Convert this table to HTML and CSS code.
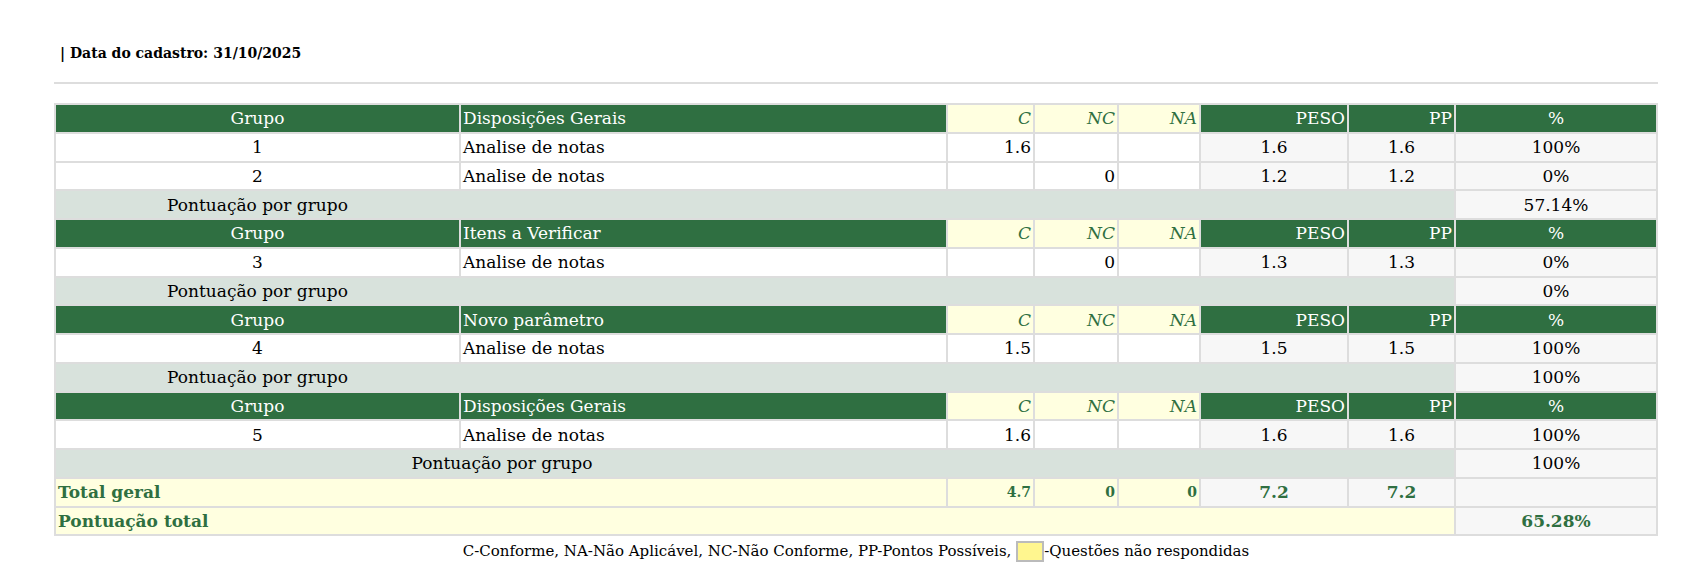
FILE: index.html
```html
<!DOCTYPE html>
<html lang="pt-BR">
<head>
<meta charset="utf-8">
<title>Relatório</title>
<link rel="stylesheet" href="styles.css">
</head>
<body>
<div class="page">
  <p class="cadastro">| Data do cadastro: 31/10/2025</p>
  <div class="rule"></div>
  <table class="score">
    <colgroup>
      <col class="c-grupo"><col class="c-nome"><col class="c-c"><col class="c-nc"><col class="c-na"><col class="c-peso"><col class="c-pp"><col class="c-pct">
    </colgroup>
    <tbody>
      <tr class="head">
        <td class="center">Grupo</td><td>Disposições Gerais</td>
        <td class="yh">C</td><td class="yh">NC</td><td class="yh">NA</td>
        <td class="right">PESO</td><td class="right">PP</td><td class="center">%</td>
      </tr>
      <tr class="item">
        <td class="center">1</td><td>Analise de notas</td>
        <td class="right">1.6</td><td class="right"></td><td class="right"></td>
        <td class="soft center">1.6</td><td class="soft center">1.6</td><td class="soft center">100%</td>
      </tr>
      <tr class="item">
        <td class="center">2</td><td>Analise de notas</td>
        <td class="right"></td><td class="right">0</td><td class="right"></td>
        <td class="soft center">1.2</td><td class="soft center">1.2</td><td class="soft center">0%</td>
      </tr>
      <tr class="sum">
        <td colspan="7"><span class="lbl lbl-1">Pontuação por grupo</span></td><td class="soft center">57.14%</td>
      </tr>
      <tr class="head">
        <td class="center">Grupo</td><td>Itens a Verificar</td>
        <td class="yh">C</td><td class="yh">NC</td><td class="yh">NA</td>
        <td class="right">PESO</td><td class="right">PP</td><td class="center">%</td>
      </tr>
      <tr class="item">
        <td class="center">3</td><td>Analise de notas</td>
        <td class="right"></td><td class="right">0</td><td class="right"></td>
        <td class="soft center">1.3</td><td class="soft center">1.3</td><td class="soft center">0%</td>
      </tr>
      <tr class="sum">
        <td colspan="7"><span class="lbl lbl-1">Pontuação por grupo</span></td><td class="soft center">0%</td>
      </tr>
      <tr class="head">
        <td class="center">Grupo</td><td>Novo parâmetro</td>
        <td class="yh">C</td><td class="yh">NC</td><td class="yh">NA</td>
        <td class="right">PESO</td><td class="right">PP</td><td class="center">%</td>
      </tr>
      <tr class="item">
        <td class="center">4</td><td>Analise de notas</td>
        <td class="right">1.5</td><td class="right"></td><td class="right"></td>
        <td class="soft center">1.5</td><td class="soft center">1.5</td><td class="soft center">100%</td>
      </tr>
      <tr class="sum">
        <td colspan="7"><span class="lbl lbl-1">Pontuação por grupo</span></td><td class="soft center">100%</td>
      </tr>
      <tr class="head">
        <td class="center">Grupo</td><td>Disposições Gerais</td>
        <td class="yh">C</td><td class="yh">NC</td><td class="yh">NA</td>
        <td class="right">PESO</td><td class="right">PP</td><td class="center">%</td>
      </tr>
      <tr class="item">
        <td class="center">5</td><td>Analise de notas</td>
        <td class="right">1.6</td><td class="right"></td><td class="right"></td>
        <td class="soft center">1.6</td><td class="soft center">1.6</td><td class="soft center">100%</td>
      </tr>
      <tr class="sum">
        <td colspan="7"><span class="lbl lbl-2">Pontuação por grupo</span></td><td class="soft center">100%</td>
      </tr>
      <tr class="total">
        <td colspan="2">Total geral</td>
        <td class="right small">4.7</td><td class="right small">0</td><td class="right small">0</td>
        <td class="soft center">7.2</td><td class="soft center">7.2</td><td class="soft"></td>
      </tr>
      <tr class="total">
        <td colspan="7">Pontuação total</td><td class="soft center">65.28%</td>
      </tr>
    </tbody>
  </table>
  <p class="legend">C-Conforme, NA-Não Aplicável, NC-Não Conforme, PP-Pontos Possíveis, <span class="swatch"></span>-Questões não respondidas</p>
</div>
</body>
</html>
```
FILE: styles.css
```css
html, body {
  margin: 0;
  padding: 0;
  background: #ffffff;
}
body {
  font-family: "DejaVu Serif", serif;
  color: #000;
}
.page {
  width: 1604px;
  margin-left: 54px;
  padding-top: 45px;
}
.cadastro {
  margin: 0 0 0 6px;
  font-size: 14px;
  font-weight: bold;
  line-height: 17px;
}
.rule {
  height: 2px;
  background: #dddddd;
  margin-top: 20px;
}
.score {
  margin-top: 19px;
  width: 1604px;
  table-layout: fixed;
  border-collapse: separate;
  border-spacing: 2px;
  background: #dddddd;
  font-size: 17px;
}
.c-grupo { width: 403px; }
.c-nome { width: 485px; }
.c-c { width: 85px; }
.c-nc { width: 82px; }
.c-na { width: 80px; }
.c-peso { width: 146px; }
.c-pp { width: 105px; }
.c-pct { width: 200px; }
.score td {
  box-sizing: border-box;
  padding: 3px 2px;
  height: 26.75px;
  line-height: 20px;
  white-space: nowrap;
  overflow: hidden;
  text-align: left;
  vertical-align: middle;
}
.center { text-align: center !important; }
.right { text-align: right !important; }
.head td {
  background: #2f6f41;
  color: #ffffff;
}
.head td.yh {
  background: #ffffe0;
  color: #2f6f41;
  font-style: italic;
  text-align: right;
}
.item td {
  background: #ffffff;
}
.score td.soft {
  background: #f7f7f7;
}
.sum td {
  background: #d8e2dc;
}
.lbl {
  display: inline-block;
  text-align: center;
}
.lbl-1 { width: 399px; }
.lbl-2 { width: 888px; }
.total td {
  background: #ffffe0;
  color: #2f6f41;
  font-weight: bold;
}
.total td.small {
  font-size: 14px;
}
.legend {
  margin: 3px 0 0;
  text-align: center;
  font-size: 15px;
  line-height: 24px;
}
.swatch {
  display: inline-block;
  width: 24px;
  height: 17px;
  background: #fff68f;
  border: 2px solid #bbbbbb;
  vertical-align: middle;
  margin-bottom: 2px;
}
```
